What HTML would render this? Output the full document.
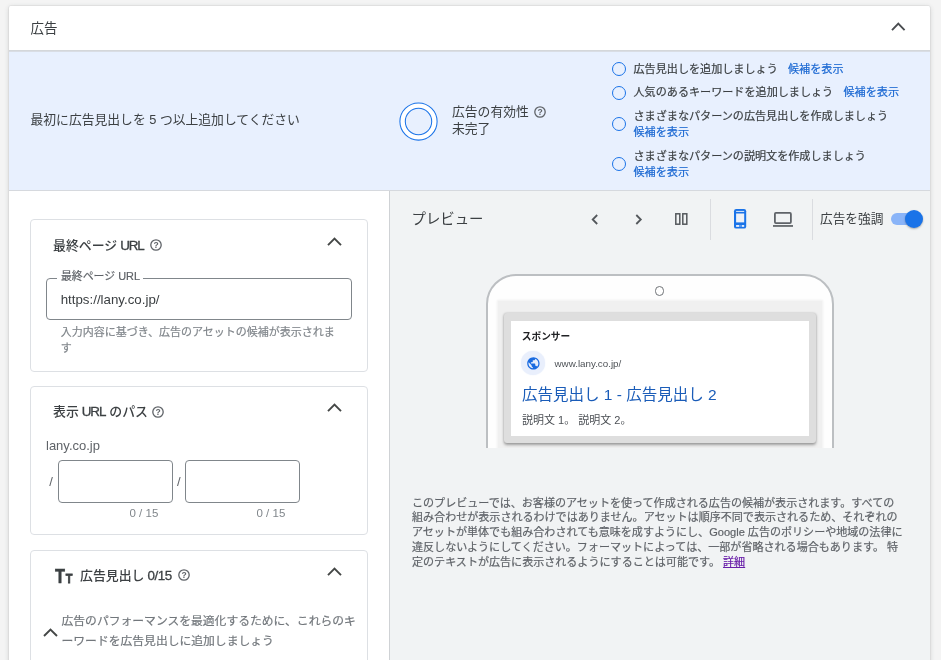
<!DOCTYPE html>
<html lang="ja">
<head>
<meta charset="utf-8">
<title>広告</title>
<style>
*{box-sizing:border-box;margin:0;padding:0}
html,body{width:941px;height:660px;overflow:hidden;background:#f4f4f4;}
body{font-family:"Liberation Sans","Noto Sans CJK JP",sans-serif;color:#3c4043;position:relative;}
.abs{position:absolute}
.card{position:absolute;left:9px;top:6px;width:921.2px;will-change:transform;height:700px;background:#fff;border-radius:2px 2px 0 0;box-shadow:0 1px 5px rgba(60,64,67,.2),0 0 1.5px rgba(60,64,67,.28);overflow:hidden}
.hdr{position:absolute;left:0;top:0;right:0;height:45px;background:#fff;border-bottom:1px solid #d4d7da;box-shadow:0 1px 0 #d9dde4,0 2px 1px rgba(232,240,254,.2);z-index:3}
.hdr .t{position:absolute;left:21.5px;top:13.7px;font-size:13.5px;line-height:18px;color:#3c4043}
.blue{position:absolute;left:0;top:45px;right:0;height:140px;background:#e8f0fe;border-bottom:1px solid #d6d9de}
.left{position:absolute;left:0;top:185px;width:381px;bottom:0;background:#fff;border-right:1px solid #cfd2d5}
.right{position:absolute;left:381px;top:185px;right:0;bottom:0;background:#f1f3f4}
svg{position:absolute;overflow:visible}
.t13{font-size:13px;line-height:18px;white-space:nowrap}
.t11{font-size:11.1px;line-height:15px;white-space:nowrap}
.t11,.sm{-webkit-text-stroke:.2px currentColor}
.lnk{color:#1967d2}
.box{position:absolute;background:#fff;border:1px solid #dde0e4;border-radius:4px}
.gray{color:#80868b}
.right>.abs,.right>svg{margin-left:-.5px}
.ttl{font-weight:500;font-size:12.9px;color:#3c4043;word-spacing:-.6px}
.ttl b{font-weight:normal;font-size:13.4px;letter-spacing:-1.1px;margin-right:1.1px;-webkit-text-stroke:.3px #3c4043}
.rad{position:absolute;left:603px;width:14px;height:14px;border:1.3px solid #1a73e8;border-radius:50%}
</style>
</head>
<body>
<div class="card">
  <div class="hdr"><div class="t">広告</div>
    <svg style="left:881.6px;top:15.7px" width="14.6" height="9.2" viewBox="0 0 14.6 9.2"><path d="M1 8.2 L7.3 1.7 L13.6 8.2" fill="none" stroke="#4a4d50" stroke-width="1.9"/></svg>
  </div>
  <div class="blue">
    <div class="abs t13" style="left:21.5px;top:59.5px;font-size:12.8px">最初に広告見出しを 5 つ以上追加してください</div>
    <svg style="left:389.5px;top:50.5px" width="39" height="39" viewBox="0 0 39 39"><circle cx="19.5" cy="19.5" r="18.6" fill="#fff" stroke="#1a73e8" stroke-width="1.05"/><circle cx="19.5" cy="19.5" r="13.2" fill="#e8f0fe" stroke="#1a73e8" stroke-width="1.05"/></svg>
    <div class="abs t13" style="left:443px;top:51.5px;font-size:12.8px">広告の有効性</div>
    <svg class="help" style="left:524.8px;top:54.5px" width="12" height="12" viewBox="0 0 12 12"><circle cx="6" cy="6" r="5.2" fill="none" stroke="#5f6368" stroke-width="1.3"/><text x="6" y="9" font-size="8.5" font-weight="bold" text-anchor="middle" fill="#5f6368" font-family="Liberation Sans,sans-serif">?</text></svg>
    <div class="abs t13" style="left:443px;top:69px;font-size:12.8px">未完了</div>
    <div class="rad" style="top:10.9px"></div>
    <div class="abs t11" style="left:624.5px;top:10.6px">広告見出しを追加しましょう</div>
    <div class="abs t11 lnk" style="left:779px;top:10.6px">候補を表示</div>
    <div class="rad" style="top:34.5px"></div>
    <div class="abs t11" style="left:624.5px;top:33.5px">人気のあるキーワードを追加しましょう</div>
    <div class="abs t11 lnk" style="left:834.5px;top:33.5px">候補を表示</div>
    <div class="rad" style="top:65.6px"></div>
    <div class="abs t11" style="left:624.5px;top:58px">さまざまなパターンの広告見出しを作成しましょう</div>
    <div class="abs t11 lnk" style="left:624.5px;top:74.3px">候補を表示</div>
    <div class="rad" style="top:106px"></div>
    <div class="abs t11" style="left:624.5px;top:98.4px">さまざまなパターンの説明文を作成しましょう</div>
    <div class="abs t11 lnk" style="left:624.5px;top:114.3px">候補を表示</div>
  </div>
  <div class="left">
    <!-- card 1 : page box 30.6,219 -> 367.3,371.5 -->
    <div class="box" style="left:21px;top:28px;width:337.5px;height:152.5px"></div>
    <div class="abs t13 ttl" style="left:44px;top:45.5px">最終ページ <b>URL</b></div>
    <svg class="help" style="left:140.6px;top:48.3px" width="12" height="12" viewBox="0 0 12 12"><circle cx="6" cy="6" r="5.2" fill="none" stroke="#5f6368" stroke-width="1.3"/><text x="6" y="9" font-size="8.5" font-weight="bold" text-anchor="middle" fill="#5f6368" font-family="Liberation Sans,sans-serif">?</text></svg>
    <svg style="left:317.6px;top:45.5px" width="15" height="9" viewBox="0 0 15 9"><path d="M1 8.2 L7.5 1.6 L14 8.2" fill="none" stroke="#444746" stroke-width="1.9"/></svg>
    <div class="abs" style="left:37px;top:86.7px;width:306px;height:42.8px;border:1px solid #80868b;border-radius:4px"></div>
    <div class="abs t11" style="left:47.9px;top:77.5px;padding:0 3.5px 0 4px;background:#fff;color:#5f6368;font-size:10.9px">最終ページ URL</div>
    <div class="abs t13" style="left:51.7px;top:99.8px;font-size:13.3px;color:#3c4043">https://lany.co.jp/</div>
    <div class="abs t11 gray" style="left:51.7px;top:132.7px;line-height:16.6px;font-size:11px">入力内容に基づき、広告のアセットの候補が表示されま<br>す</div>

    <!-- card 2 : page box 30.6,386.4 -> 367.3,534 -->
    <div class="box" style="left:21px;top:194.8px;width:337.5px;height:148.8px"></div>
    <div class="abs t13 ttl" style="left:44px;top:212px">表示 <b>URL</b> のパス</div>
    <svg class="help" style="left:143.3px;top:214.8px" width="12" height="12" viewBox="0 0 12 12"><circle cx="6" cy="6" r="5.2" fill="none" stroke="#5f6368" stroke-width="1.3"/><text x="6" y="9" font-size="8.5" font-weight="bold" text-anchor="middle" fill="#5f6368" font-family="Liberation Sans,sans-serif">?</text></svg>
    <svg style="left:317.6px;top:212.2px" width="15" height="9" viewBox="0 0 15 9"><path d="M1 8.2 L7.5 1.6 L14 8.2" fill="none" stroke="#444746" stroke-width="1.9"/></svg>
    <div class="abs t13" style="left:37px;top:246px;font-size:13px;color:#5f6368">lany.co.jp</div>
    <div class="abs t13" style="left:40.2px;top:282.3px;font-size:13px;color:#5f6368">/</div>
    <div class="abs" style="left:49px;top:269px;width:115px;height:42.5px;border:1px solid #80868b;border-radius:4px"></div>
    <div class="abs t13" style="left:168px;top:282.3px;font-size:13px;color:#5f6368">/</div>
    <div class="abs" style="left:176px;top:269px;width:115px;height:42.5px;border:1px solid #80868b;border-radius:4px"></div>
    <div class="abs t11 gray" style="left:120.5px;top:314.5px;font-size:11.5px;-webkit-text-stroke:0">0 / 15</div>
    <div class="abs t11 gray" style="left:247.5px;top:314.5px;font-size:11.5px;-webkit-text-stroke:0">0 / 15</div>

    <!-- card 3 : page top 551 -->
    <div class="box" style="left:21px;top:359.3px;width:337.5px;height:200px"></div>
    <div class="abs" style="left:46px;top:374.5px;font-size:19.5px;line-height:20px;font-weight:bold;color:#3c4043;letter-spacing:-1.6px;white-space:nowrap;transform:scaleX(.84);transform-origin:0 0;-webkit-text-stroke:.5px #3c4043">T<span style="font-size:13px;margin-left:2.4px;-webkit-text-stroke:.8px #3c4043">T</span></div>
    <div class="abs t13 ttl" style="left:71px;top:375.5px">広告見出し <b style="letter-spacing:-.45px">0/15</b></div>
    <svg class="help" style="left:168.8px;top:378.4px" width="12" height="12" viewBox="0 0 12 12"><circle cx="6" cy="6" r="5.2" fill="none" stroke="#5f6368" stroke-width="1.3"/><text x="6" y="9" font-size="8.5" font-weight="bold" text-anchor="middle" fill="#5f6368" font-family="Liberation Sans,sans-serif">?</text></svg>
    <svg style="left:317.6px;top:376.2px" width="15" height="9" viewBox="0 0 15 9"><path d="M1 8.2 L7.5 1.6 L14 8.2" fill="none" stroke="#444746" stroke-width="1.9"/></svg>
    <div class="abs sm" style="left:52.5px;top:419.6px;font-size:11.8px;line-height:20.4px;white-space:nowrap;color:#72777c">広告のパフォーマンスを最適化するために、これらのキ<br>ーワードを広告見出しに追加しましょう</div>
    <svg style="left:34.3px;top:436.7px" width="15" height="9" viewBox="0 0 15 9"><path d="M1 8 L7.5 1.6 L14 8" fill="none" stroke="#444746" stroke-width="1.9"/></svg>
  </div>
  <div class="right">
    <div class="abs" style="left:22px;top:18px;font-size:14.4px;line-height:20px;color:#3c4043;white-space:nowrap">プレビュー</div>
    <svg style="left:201.5px;top:22.8px" width="7.5" height="11" viewBox="0 0 7.5 11"><path d="M6.2 1 L1.7 5.5 L6.2 10" fill="none" stroke="#54585c" stroke-width="1.8"/></svg>
    <svg style="left:245px;top:22.8px" width="7.5" height="11" viewBox="0 0 7.5 11"><path d="M1.3 1 L5.8 5.5 L1.3 10" fill="none" stroke="#54585c" stroke-width="1.8"/></svg>
    <svg style="left:285.5px;top:22px" width="13" height="12" viewBox="0 0 13 12"><rect x="0.8" y="0.8" width="4" height="10.4" fill="none" stroke="#54585c" stroke-width="1.5"/><rect x="7.8" y="0.8" width="4" height="10.4" fill="none" stroke="#54585c" stroke-width="1.5"/></svg>
    <div class="abs" style="left:320.5px;top:8px;width:1px;height:41px;background:#dadce0"></div>
    <svg style="left:344.2px;top:18.1px" width="12.2" height="19.6" viewBox="0 0 12.2 19.6"><rect x="0" y="0" width="12.2" height="19.6" rx="2.2" fill="#1a73e8"/><rect x="2.1" y="1.9" width="8.1" height="1" fill="#dfe9fb"/><rect x="2.1" y="4.5" width="8.1" height="8.9" fill="#eef1f8"/><rect x="2.1" y="16" width="2.9" height="1.9" fill="#e4ecfb"/><rect x="7.8" y="16" width="2.4" height="1.9" fill="#e4ecfb"/><rect x="5" y="16" width="2.8" height="1.9" fill="#5b9bf0"/></svg>
    <svg style="left:383.5px;top:21px" width="20" height="15" viewBox="0 0 20 15"><rect x="1.9" y="0.9" width="16" height="10.2" rx="1" fill="none" stroke="#5f6368" stroke-width="1.8"/><rect x="0" y="13" width="20" height="1.9" fill="#6b6f73"/></svg>
    <div class="abs" style="left:422.5px;top:8px;width:1px;height:41px;background:#dadce0"></div>
    <div class="abs t13" style="left:430.5px;top:18.5px;font-size:12.7px;color:#3c4043">広告を強調</div>
    <div class="abs" style="left:501.5px;top:22px;width:31px;height:12px;border-radius:6px;background:#8ab4f8"></div>
    <div class="abs" style="left:515.5px;top:19px;width:18px;height:18px;border-radius:50%;background:#1a73e8;box-shadow:0 1px 2px rgba(0,0,0,.3)"></div>

    <!-- phone -->
    <div class="abs" style="left:96.7px;top:83.4px;width:347.7px;height:174px;overflow:hidden">
      <div class="abs" style="left:0;top:0;width:347.7px;height:260px;border:2px solid #bcbfc2;border-radius:30px;background:#fefefe"></div>
      <div class="abs" style="left:12px;top:27px;width:323.7px;height:200px;background:#f0f0f0;box-shadow:0 0 2px 1px #f0f0f0"></div>
      <div class="abs" style="left:168.8px;top:12.1px;width:9.4px;height:9.4px;border:1.1px solid #6f7377;border-radius:50%;background:#fff"></div>
      <div class="abs" style="left:17.6px;top:38.2px;width:312px;height:130px;background:#dedede;border-radius:3px;box-shadow:0 1.5px 3px rgba(0,0,0,.34),0 0 2px rgba(0,0,0,.12)"></div>
      <div class="abs" style="left:24.8px;top:46.5px;width:298.1px;height:114.8px;background:#fff"></div>
      <div class="abs" style="left:35.6px;top:55.2px;font-size:9.7px;line-height:14px;font-weight:bold;color:#202124;white-space:nowrap">スポンサー</div>
      <div class="abs" style="left:35.2px;top:76.9px;width:23.6px;height:23.6px;border-radius:50%;background:#e9effc;box-shadow:0 0 1.5px #e9effc"></div>
      <svg style="left:39.6px;top:81.3px" width="14.8" height="14.8" viewBox="0 0 24 24"><path fill="#1a6be0" d="M12 2C6.480 2 2 6.480 2 12s4.480 10 10 10 10-4.480 10-10S17.520 2 12 2zm-1 17.930c-3.950-.490-7-3.850-7-7.930 0-.620.080-1.210.210-1.790L9 15v1c0 1.100.900 2 2 2v1.930zm6.900-2.540c-.260-.810-1-1.390-1.900-1.390h-1v-3c0-.550-.450-1-1-1H8v-2h2c.550 0 1-.450 1-1V7h2c1.100 0 2-.900 2-2v-.410c2.930 1.190 5 4.060 5 7.410 0 2.080-.800 3.970-2.100 5.390z"/></svg>
      <div class="abs" style="left:68.3px;top:82.6px;font-size:9.8px;line-height:14px;color:#4d5156;white-space:nowrap">www.lany.co.jp/</div>
      <div class="abs" style="left:35.8px;top:109.3px;font-size:15.5px;line-height:22px;color:#1a5cb8;white-space:nowrap">広告見出し 1 - 広告見出し 2</div>
      <div class="abs" style="left:35.8px;top:138.8px;font-size:11px;line-height:15px;color:#4d5156;white-space:nowrap">説明文 1。 説明文 2。</div>
    </div>

    <div class="abs sm" style="left:22.5px;top:304.5px;font-size:11.05px;line-height:14.75px;color:#5f6368;white-space:nowrap">このプレビューでは、お客様のアセットを使って作成される広告の候補が表示されます。すべての<br>組み合わせが表示されるわけではありません。アセットは順序不同で表示されるため、それぞれの<br>アセットが単体でも組み合わされても意味を成すようにし、Google 広告のポリシーや地域の法律に<br>違反しないようにしてください。フォーマットによっては、一部が省略される場合もあります。 特<br>定のテキストが広告に表示されるようにすることは可能です。 <span style="color:#681da8;text-decoration:underline">詳細</span></div>
  </div>
</div>
</body>
</html>
